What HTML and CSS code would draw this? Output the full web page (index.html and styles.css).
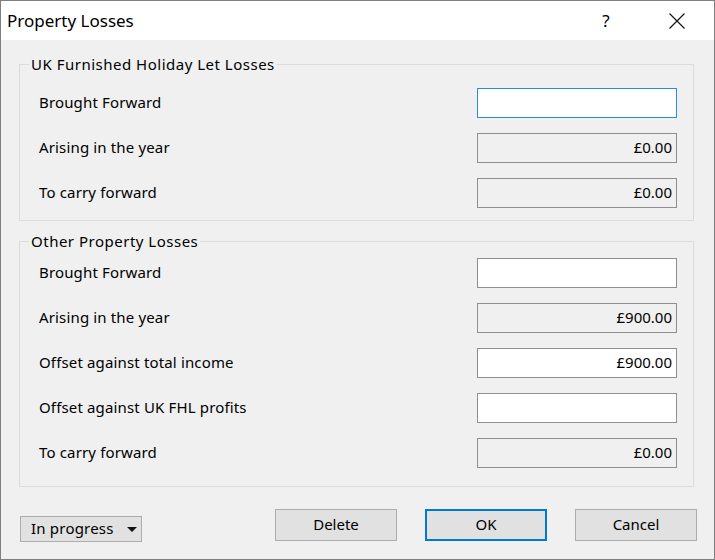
FILE: index.html
```html
<!DOCTYPE html>
<html lang="en">
<head>
<meta charset="utf-8">
<title>Property Losses</title>
<link rel="stylesheet" href="styles.css">
</head>
<body>
<div class="window">
  <div class="titlebar">
    <span class="title">Property Losses</span>
    <span class="help">?</span>
    <span class="close">
      <svg width="16" height="16" viewBox="0 0 16 16"><path d="M0.5 0.5 L15.5 15.5 M15.5 0.5 L0.5 15.5" stroke="#111" stroke-width="1.2" fill="none"/></svg>
    </span>
  </div>
  <div class="content">
    <fieldset class="group group-fhl">
      <legend>UK Furnished Holiday Let Losses</legend>
      <div class="rows">
        <div class="row"><span class="label">Brought Forward</span><span class="field focused"></span></div>
        <div class="row"><span class="label">Arising in the year</span><span class="field readonly">£0.00</span></div>
        <div class="row"><span class="label">To carry forward</span><span class="field readonly">£0.00</span></div>
      </div>
    </fieldset>
    <fieldset class="group group-other">
      <legend>Other Property Losses</legend>
      <div class="rows">
        <div class="row"><span class="label">Brought Forward</span><span class="field"></span></div>
        <div class="row"><span class="label">Arising in the year</span><span class="field readonly">£900.00</span></div>
        <div class="row"><span class="label">Offset against total income</span><span class="field">£900.00</span></div>
        <div class="row"><span class="label">Offset against UK FHL profits</span><span class="field"></span></div>
        <div class="row"><span class="label">To carry forward</span><span class="field readonly">£0.00</span></div>
      </div>
    </fieldset>
    <div class="footer">
      <div class="dropdown"><span>In progress</span><span class="caret"></span></div>
      <div class="buttons">
        <button class="btn">Delete</button>
        <button class="btn default">OK</button>
        <button class="btn">Cancel</button>
      </div>
    </div>
  </div>
</div>
</body>
</html>
```
FILE: styles.css
```css
* { box-sizing: border-box; }
html, body { margin: 0; padding: 0; }
body {
  font-family: "Segoe UI", "Noto Sans", sans-serif;
  font-size: 15px;
  color: #1a1a1a;
  background: #f0f0f0;
}
.window {
  width: 715px;
  height: 560px;
  border: 1px solid #7f7f7f;
  background: #f0f0f0;
  display: flex;
  flex-direction: column;
}
.titlebar {
  height: 39px;
  background: #ffffff;
  display: flex;
  align-items: center;
  padding: 0 29px 0 6px;
  flex-shrink: 0;
}
.title {
  flex: 1;
  font-size: 17px;
  color: #000;
  padding-bottom: 1px;
}
.help {
  width: 10px;
  text-align: center;
  font-size: 17px;
  color: #000;
}
.close {
  margin-left: 58px;
  display: flex;
}
.content {
  padding: 15px 20px 0 18px;
  display: flex;
  flex-direction: column;
}
.group {
  margin: 0;
  padding: 0;
  border: 1px solid #dcdcdc;
  min-width: 0;
}
.group legend {
  margin-left: 9px;
  padding: 0 2px;
  line-height: 18px;
  font-size: 15px;
  letter-spacing: 0.5px;
  color: #000;
}
.group-fhl .rows { padding: 15px 16px 12px 19px; }
.group-other { margin-top: 11px; }
.group-other .rows { padding: 8px 16px 18px 19px; }
.rows {
  display: flex;
  flex-direction: column;
  gap: 15px;
}
.row {
  height: 30px;
  display: flex;
  align-items: center;
  justify-content: space-between;
}
.label {
  padding-bottom: 3px;
  color: #000;
  letter-spacing: 0.15px;
}
.field {
  width: 200px;
  height: 30px;
  border: 1px solid #8f8f8f;
  background: #ffffff;
  display: flex;
  align-items: center;
  justify-content: flex-end;
  padding: 0 4px 2px 4px;
  color: #000;
}
.field.readonly { background: #f0f0f0; }
.field.focused { border-color: #2b8ae2; }
.footer {
  margin: 22px -3px 0 1px;
  display: flex;
  align-items: flex-end;
  justify-content: space-between;
}
.dropdown {
  width: 122px;
  height: 26px;
  margin-bottom: -1px;
  border: 1px solid #adadad;
  background: #e1e1e1;
  display: flex;
  align-items: center;
  padding: 0 0 2px 10px;
  color: #000;
  letter-spacing: 0.2px;
}
.caret {
  margin-left: 13px;
  width: 0;
  height: 0;
  border-left: 5px solid transparent;
  border-right: 5px solid transparent;
  border-top: 5px solid #111;
  margin-top: 2px;
}
.buttons {
  display: flex;
  gap: 28px;
}
.btn {
  width: 122px;
  height: 32px;
  border: 1px solid #adadad;
  background: #e1e1e1;
  font-family: inherit;
  font-size: 15px;
  color: #000;
  padding: 0 0 2px 0;
  margin: 0;
}
.btn.default {
  border: 2px solid #0078d7;
}
```
